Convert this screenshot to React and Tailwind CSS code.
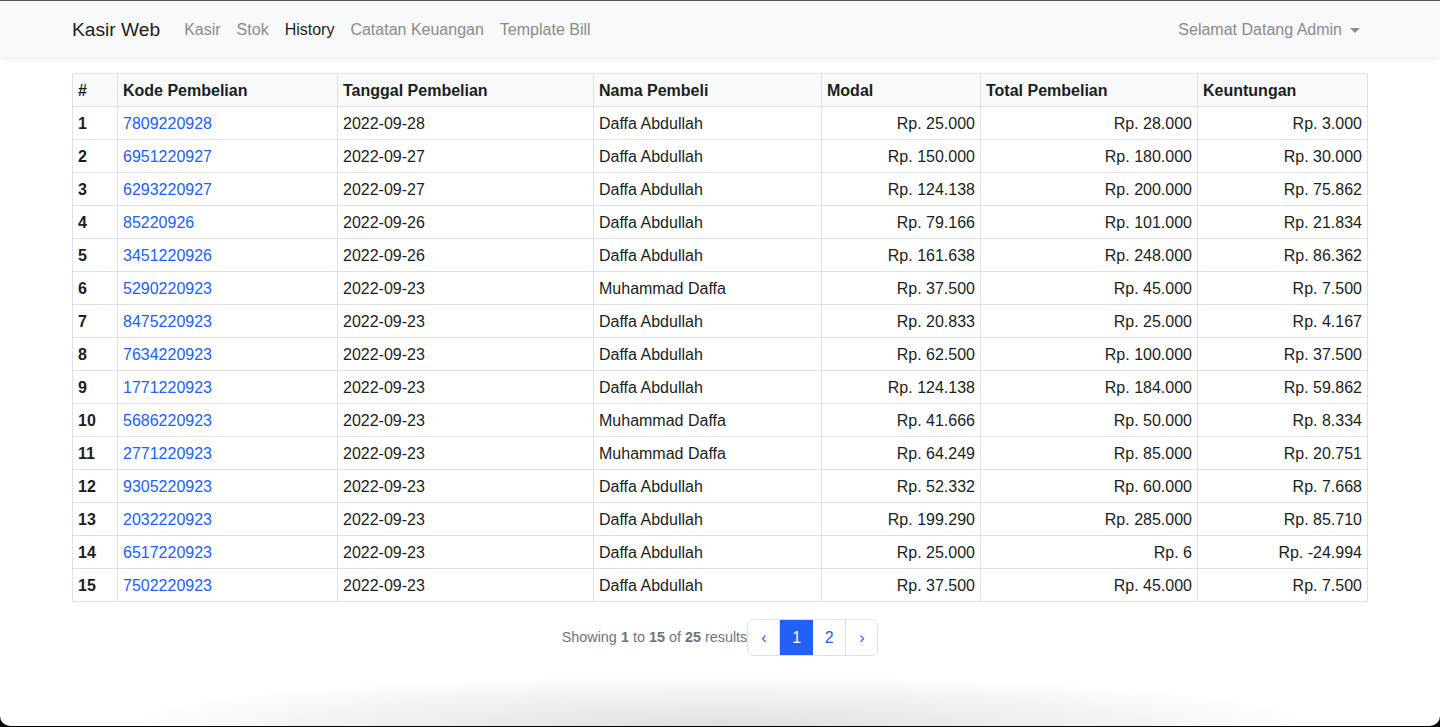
import React from "react";

const rows = [
  ["1", "7809220928", "2022-09-28", "Daffa Abdullah", "Rp. 25.000", "Rp. 28.000", "Rp. 3.000"],
  ["2", "6951220927", "2022-09-27", "Daffa Abdullah", "Rp. 150.000", "Rp. 180.000", "Rp. 30.000"],
  ["3", "6293220927", "2022-09-27", "Daffa Abdullah", "Rp. 124.138", "Rp. 200.000", "Rp. 75.862"],
  ["4", "85220926", "2022-09-26", "Daffa Abdullah", "Rp. 79.166", "Rp. 101.000", "Rp. 21.834"],
  ["5", "3451220926", "2022-09-26", "Daffa Abdullah", "Rp. 161.638", "Rp. 248.000", "Rp. 86.362"],
  ["6", "5290220923", "2022-09-23", "Muhammad Daffa", "Rp. 37.500", "Rp. 45.000", "Rp. 7.500"],
  ["7", "8475220923", "2022-09-23", "Daffa Abdullah", "Rp. 20.833", "Rp. 25.000", "Rp. 4.167"],
  ["8", "7634220923", "2022-09-23", "Daffa Abdullah", "Rp. 62.500", "Rp. 100.000", "Rp. 37.500"],
  ["9", "1771220923", "2022-09-23", "Daffa Abdullah", "Rp. 124.138", "Rp. 184.000", "Rp. 59.862"],
  ["10", "5686220923", "2022-09-23", "Muhammad Daffa", "Rp. 41.666", "Rp. 50.000", "Rp. 8.334"],
  ["11", "2771220923", "2022-09-23", "Muhammad Daffa", "Rp. 64.249", "Rp. 85.000", "Rp. 20.751"],
  ["12", "9305220923", "2022-09-23", "Daffa Abdullah", "Rp. 52.332", "Rp. 60.000", "Rp. 7.668"],
  ["13", "2032220923", "2022-09-23", "Daffa Abdullah", "Rp. 199.290", "Rp. 285.000", "Rp. 85.710"],
  ["14", "6517220923", "2022-09-23", "Daffa Abdullah", "Rp. 25.000", "Rp. 6", "Rp. -24.994"],
  ["15", "7502220923", "2022-09-23", "Daffa Abdullah", "Rp. 37.500", "Rp. 45.000", "Rp. 7.500"],
];

const cell = "border border-[#dee2e6] px-[5px] pt-[2px] h-[33px] align-middle";

export default function App() {
  return (
    <div className="w-[1440px] h-[727px] bg-black font-['Liberation_Sans',Arial,sans-serif] text-[#1b1e21]">
      <div className="relative h-[726px] bg-white border-t border-[#555] rounded-b-[10px] overflow-hidden">
        <nav className="h-[56px] bg-[#f8f9fa] shadow-[0_2px_6px_rgba(0,0,0,0.08)] relative z-10">
          <div className="w-[1296px] mx-auto h-full flex items-center pt-[2px]">
            <span className="text-[19.2px] text-[#1b1e21] mr-[16px]">Kasir Web</span>
            <a className="px-[8px] text-[16px] text-[#8a8b8c]">Kasir</a>
            <a className="px-[8px] text-[16px] text-[#8a8b8c]">Stok</a>
            <a className="px-[8px] text-[16px] text-[#1d1f21]">History</a>
            <a className="px-[8px] text-[16px] text-[#8a8b8c]">Catatan Keuangan</a>
            <a className="px-[8px] text-[16px] text-[#8a8b8c]">Template Bill</a>
            <div className="ml-auto px-[8px] flex items-center text-[16px] text-[#8a8b8c]">
              <span>Selamat Datang Admin</span>
              <span className="ml-[8px] w-0 h-0 border-l-[5px] border-r-[5px] border-t-[5px] border-l-transparent border-r-transparent border-t-[#8a8b8c]"></span>
            </div>
          </div>
        </nav>

        <div className="w-[1296px] mx-auto pt-[16px]">
          <table className="w-full border-collapse text-[16px]">
            <thead>
              <tr className="bg-[#f8f9fa] font-bold text-left">
                <th className={cell + " w-[45px]"}>#</th>
                <th className={cell + " w-[220px]"}>Kode Pembelian</th>
                <th className={cell + " w-[256px]"}>Tanggal Pembelian</th>
                <th className={cell + " w-[228px]"}>Nama Pembeli</th>
                <th className={cell + " w-[159px]"}>Modal</th>
                <th className={cell + " w-[217px]"}>Total Pembelian</th>
                <th className={cell + " w-[170px]"}>Keuntungan</th>
              </tr>
            </thead>
            <tbody>
              {rows.map((r) => (
                <tr key={r[0]}>
                  <td className={cell + " font-bold"}>{r[0]}</td>
                  <td className={cell + " text-[#2360f7]"}>{r[1]}</td>
                  <td className={cell}>{r[2]}</td>
                  <td className={cell}>{r[3]}</td>
                  <td className={cell + " text-right"}>{r[4]}</td>
                  <td className={cell + " text-right"}>{r[5]}</td>
                  <td className={cell + " text-right"}>{r[6]}</td>
                </tr>
              ))}
            </tbody>
          </table>

          <div className="flex justify-center items-center mt-[17px]">
            <span className="text-[14.4px] text-[#6c757d]">
              Showing <span className="font-bold">1</span> to <span className="font-bold">15</span> of{" "}
              <span className="font-bold">25</span> results
            </span>
            <div className="flex h-[37px] border border-[#dee2e6] rounded-[6px] overflow-hidden text-[16px]">
              <span className="w-[32px] flex items-center justify-center text-[#2360f7] border-r border-[#dee2e6]">‹</span>
              <span className="w-[33px] flex items-center justify-center bg-[#2360f7] text-white">1</span>
              <span className="w-[33px] flex items-center justify-center text-[#2360f7] border-r border-[#dee2e6]">2</span>
              <span className="w-[31px] flex items-center justify-center text-[#2360f7]">›</span>
            </div>
          </div>
        </div>

        <div className="absolute bottom-0 left-[150px] right-[150px] h-[48px] bg-[radial-gradient(ellipse_at_bottom,rgba(0,0,0,0.12),rgba(0,0,0,0.04)_55%,transparent_75%)] pointer-events-none"></div>
      </div>
    </div>
  );
}
